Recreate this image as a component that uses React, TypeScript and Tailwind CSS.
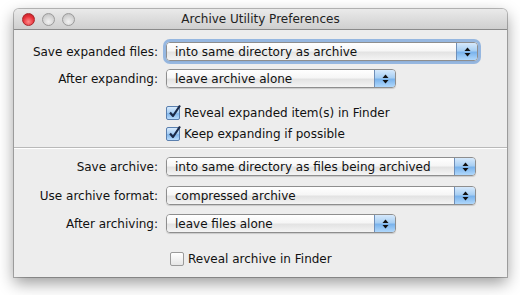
const font = { fontFamily: '"DejaVu Sans", "Liberation Sans", sans-serif' };

function Light({ color }: { color: "red" | "gray" }) {
  return color === "red" ? (
    <span className="block w-[13px] h-[13px] rounded-full border border-[#a8262a] bg-[radial-gradient(circle_at_50%_70%,#ff8a8a_0%,#e8323a_55%,#b31d22_100%)]" />
  ) : (
    <span className="block w-[13px] h-[13px] rounded-full border border-[#9b9b9b] bg-[radial-gradient(circle_at_50%_70%,#f2f2f2_0%,#d2d2d2_60%,#b8b8b8_100%)]" />
  );
}

function Arrows() {
  return (
    <svg width="7" height="10" viewBox="0 0 7 10">
      <path d="M3.5 0.5 L6.5 4 L0.5 4 Z" fill="#111" />
      <path d="M0.5 6 L6.5 6 L3.5 9.5 Z" fill="#111" />
    </svg>
  );
}

function Popup({ value, width, focused }: { value: string; width: string; focused?: boolean }) {
  return (
    <div
      className={`${width} h-[19px] flex rounded-[4px] border border-[#8e8e8e] overflow-hidden shadow-[0_1px_1px_rgba(0,0,0,0.15)] ${
        focused ? "outline outline-[3px] outline-[#7fa9dc]/80" : ""
      }`}
    >
      <div className="flex-1 flex items-center pl-[8px] text-[12px] leading-[14px] text-[#111] bg-[linear-gradient(#ffffff_0%,#f6f6f6_45%,#e3e3e3_55%,#f4f4f4_100%)]">
        {value}
      </div>
      <div className="w-[21px] flex items-center justify-center border-l border-[#6f8fb8] bg-[linear-gradient(#d6e9fc_0%,#a8cff3_45%,#7ab3ec_55%,#b0d8fc_100%)]">
        <Arrows />
      </div>
    </div>
  );
}

function Check({ label, checked }: { label: string; checked?: boolean }) {
  return (
    <div className="h-[14px] flex items-center gap-[4px] text-[12px] leading-[14px] text-[#111]">
      <span
        className={`relative w-[14px] h-[14px] rounded-[2px] border ${
          checked
            ? "border-[#5a7fae] bg-[linear-gradient(#d8ebfd_0%,#a4ccf3_50%,#80b5ea_55%,#b9dcfd_100%)]"
            : "border-[#9a9a9a] bg-[linear-gradient(#ffffff,#e6e6e6)]"
        }`}
      >
        {checked && (
          <svg className="absolute left-[1px] -top-[3px]" width="14" height="15" viewBox="0 0 14 15">
            <path d="M2 8.5 L5 12 L12 1.5" fill="none" stroke="#1b2a48" strokeWidth="2.2" strokeLinejoin="round" />
          </svg>
        )}
      </span>
      <span>{label}</span>
    </div>
  );
}

function Row({ label, children }: { label: string; children: React.ReactNode }) {
  return (
    <div className="h-[19px] flex items-center">
      <div className="w-[144px] text-right text-[12px] leading-[14px] text-[#111]">{label}</div>
      <div className="ml-[8px]">{children}</div>
    </div>
  );
}

export default function App() {
  return (
    <div className="w-[520px] h-[295px] bg-white pt-[9px] pl-[14px]" style={font}>
      <div className="w-[493px] h-[268px] rounded-t-[5px] bg-[#ededed] shadow-[0_6px_16px_rgba(0,0,0,0.4),0_0_0_1px_rgba(0,0,0,0.25)] flex flex-col">
        <div className="relative h-[21px] shrink-0 rounded-t-[5px] border-b border-[#8a8a8a] bg-[linear-gradient(#eaeaea,#cfcfcf)] flex items-center">
          <div className="flex gap-[7px] pl-[8px]">
            <Light color="red" />
            <Light color="gray" />
            <Light color="gray" />
          </div>
          <div className="absolute inset-0 flex items-center justify-center text-[12px] text-[#222]">
            Archive Utility Preferences
          </div>
        </div>

        <div className="flex flex-col pt-[12px]">
          <Row label="Save expanded files:">
            <Popup value="into same directory as archive" width="w-[312px]" focused />
          </Row>
          <div className="mt-[8px]">
            <Row label="After expanding:">
              <Popup value="leave archive alone" width="w-[230px]" />
            </Row>
          </div>
          <div className="ml-[152px] mt-[18px] flex flex-col gap-[7px]">
            <Check label="Reveal expanded item(s) in Finder" checked />
            <Check label="Keep expanding if possible" checked />
          </div>
        </div>

        <div className="mt-[6px] h-[2px] shrink-0 border-t border-[#b9b9b9] border-b-white border-b" />

        <div className="flex flex-col pt-[8px]">
          <Row label="Save archive:">
            <Popup value="into same directory as files being archived" width="w-[310px]" />
          </Row>
          <div className="mt-[10px]">
            <Row label="Use archive format:">
              <Popup value="compressed archive" width="w-[310px]" />
            </Row>
          </div>
          <div className="mt-[9px]">
            <Row label="After archiving:">
              <Popup value="leave files alone" width="w-[230px]" />
            </Row>
          </div>
          <div className="ml-[156px] mt-[19px]">
            <Check label="Reveal archive in Finder" />
          </div>
        </div>
      </div>
    </div>
  );
}
